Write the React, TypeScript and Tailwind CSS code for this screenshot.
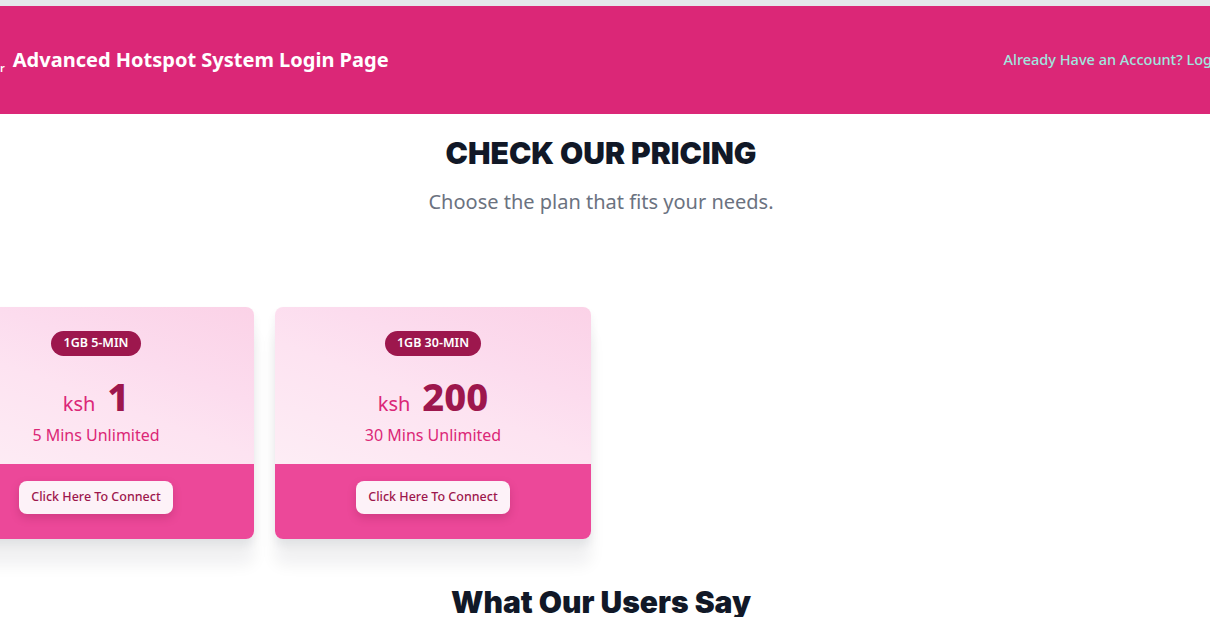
import React from "react";

type Plan = {
  id: string;
  badge: string;
  price: string;
  label: string;
};

const plans: Plan[] = [
  { id: "5min", badge: "1GB 5-MIN", price: "1", label: "5 Mins Unlimited" },
  { id: "30min", badge: "1GB 30-MIN", price: "200", label: "30 Mins Unlimited" },
];

function PlanCard({ plan }: { plan: Plan }) {
  return (
    <div className="w-[316px] shrink-0 rounded-lg overflow-hidden shadow-[0_26px_16px_0px_rgba(15,23,42,0.06),0_6px_10px_rgba(15,23,42,0.07)]">
      {/* top part with the price */}
      <div className="h-[157px] flex flex-col items-center pt-6 bg-[linear-gradient(200deg,#fbd2e7_0%,#fcdcee_35%,#fde3f1_55%,#fdedf5_100%)]">
        <span className="rounded-full bg-[#9d174d] text-white text-[12.5px] font-semibold leading-none px-3 py-[6px]">
          {plan.badge}
        </span>
        <div className="flex items-baseline gap-3 mt-[18px]">
          <span className="text-[20px] text-[#db2777]">ksh</span>
          <span className="text-[38px] leading-[44px] font-extrabold text-[#9d174d]">{plan.price}</span>
        </div>
        <div className="text-[16px] text-[#db2777] mt-[4px]">{plan.label}</div>
      </div>
      {/* bottom part with the button */}
      <div className="h-[75px] bg-[#ec4899] flex justify-center pt-[17px]">
        <button className="h-[33px] px-3 rounded-lg bg-[#fdf2f8] text-[#9d174d] text-[12.5px] font-medium shadow-[0_4px_8px_rgba(131,24,67,0.25)]">
          Click Here To Connect
        </button>
      </div>
    </div>
  );
}

export default function App() {
  return (
    <div className="w-[1210px] h-[617px] overflow-hidden bg-white font-['Noto_Sans',sans-serif]">
      <div className="h-[6px] bg-[#e5e7eb]" />

      {/* Header */}
      <header className="h-[108px] bg-[#db2777] flex items-center">
        <span className="text-white text-[11px] font-semibold mt-[16px] ml-0">r</span>
        <h1 className="ml-[8px] text-white text-[20px] font-bold">Advanced Hotspot System Login Page</h1>
        <a className="ml-auto -mr-[15px] text-[#9fe6df] text-[14.5px] font-medium whitespace-nowrap">
          Already Have an Account? Login
        </a>
      </header>

      {/* Pricing */}
      <section className="pr-[8px] flex flex-col items-center">
        <h2 className="mt-[17px] text-[30px] font-black text-[#111827] font-['Inter',sans-serif]">
          CHECK OUR PRICING
        </h2>
        <p className="mt-[11px] text-[20px] text-[#6b7280]">Choose the plan that fits your needs.</p>
      </section>

      <div className="flex gap-[21px] -ml-[62px] mt-[90px]">
        {plans.map((p) => (
          <PlanCard key={p.id} plan={p} />
        ))}
      </div>

      <section className="pr-[8px] flex flex-col items-center">
        <h2 className="mt-[41px] text-[30px] font-black text-[#111827] font-['Inter',sans-serif]">
          What Our Users Say
        </h2>
      </section>
    </div>
  );
}
